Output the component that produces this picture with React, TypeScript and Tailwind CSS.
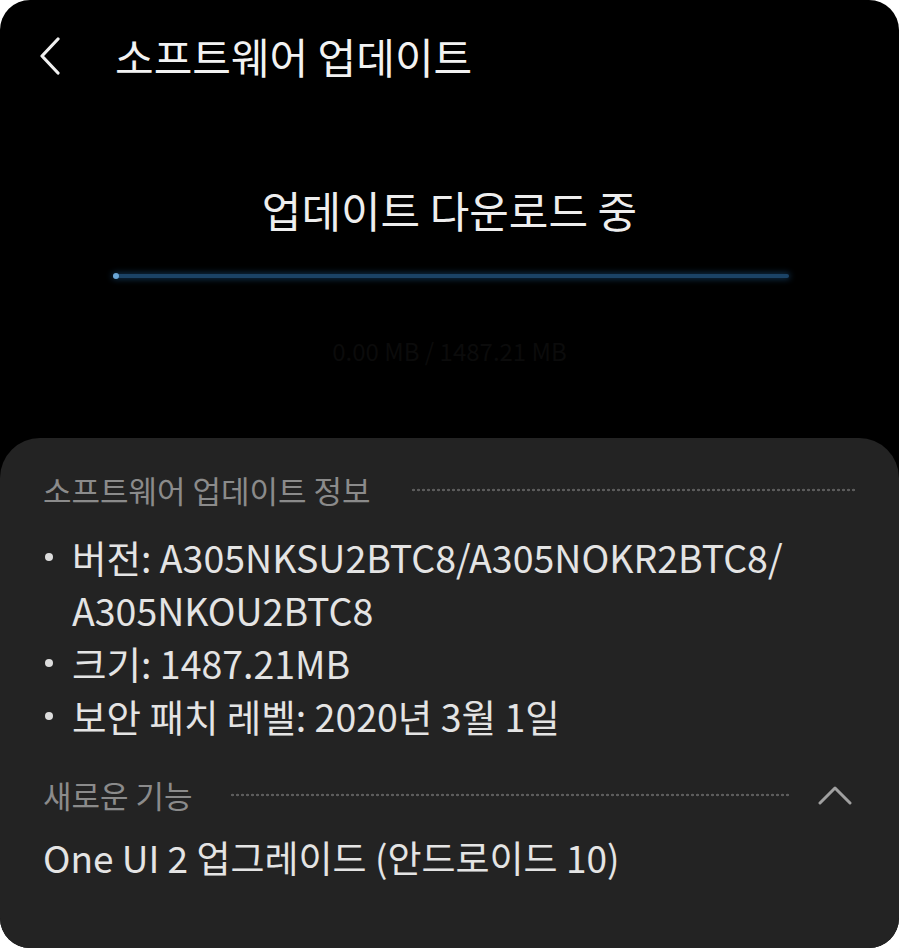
import React from "react";

const font = "font-['Noto_Sans_CJK_KR','Noto_Sans',sans-serif]";

function Dots({ className = "" }: { className?: string }) {
  return (
    <div
      className={`h-[4px] bg-[radial-gradient(circle,#5c5c5c_1.1px,transparent_1.6px)] bg-[length:5px_4px] ${className}`}
    />
  );
}

function Bullet({ children }: { children: React.ReactNode }) {
  return (
    <div className="flex items-start leading-[53px]">
      <div className="w-[29px] h-[53px] flex items-center">
        <div className="w-[8px] h-[8px] rounded-full bg-[#dcdcdc] ml-[2px]" />
      </div>
      <div className="whitespace-nowrap">{children}</div>
    </div>
  );
}

export default function App() {
  return (
    <div className={`w-[899px] h-[948px] bg-white ${font}`}>
      <div className="w-full h-full rounded-[30px] bg-black overflow-hidden flex flex-col">
        {/* top black area */}
        <div className="h-[438px] flex flex-col shrink-0">
          <div className="h-[112px] flex items-center">
            <svg
              width="22"
              height="38"
              viewBox="0 0 22 38"
              className="ml-[39px]"
              fill="none"
              stroke="#f0f0f0"
              strokeWidth="3.2"
              strokeLinecap="round"
              strokeLinejoin="round"
            >
              <polyline points="19,2 3,19 19,36" />
            </svg>
            <div className="ml-[54px] text-[42px] leading-[50px] text-[#f2f2f2] whitespace-nowrap">
              소프트웨어 업데이트
            </div>
          </div>
          <div className="mt-[67px] text-center text-[43px] leading-[60px] text-[#eeeeee] whitespace-nowrap">
            업데이트 다운로드 중
          </div>
          <div className="mt-[35px] ml-[113px] w-[676px] h-[4px] relative">
            <div className="absolute inset-0 rounded-full bg-[#1b4366] shadow-[0_0_6px_1px_#123553]" />
            <div className="absolute left-0 top-[-1px] w-[6px] h-[6px] rounded-full bg-[#6aa6d6]" />
          </div>
          <div className="mt-[58px] text-center text-[24px] leading-[30px] text-[#0b0b0b] whitespace-nowrap">
            0.00 MB / 1487.21 MB
          </div>
        </div>

        {/* bottom card */}
        <div className="flex-1 bg-[#232323] rounded-t-[40px] px-[43px] pt-[32px]">
          <div className="flex items-center h-[40px]">
            <div className="text-[31px] leading-[40px] text-[#8b8b8b] whitespace-nowrap">
              소프트웨어 업데이트 정보
            </div>
            <Dots className="flex-1 ml-[40px] mr-[1px]" />
          </div>

          <div className="mt-[20px] text-[37.5px] text-[#e4e4e4]">
            <Bullet>
              버전: A305NKSU2BTC8/A305NOKR2BTC8/
              <br />
              A305NKOU2BTC8
            </Bullet>
            <Bullet>크기: 1487.21MB</Bullet>
            <Bullet>보안 패치 레벨: 2020년 3월 1일</Bullet>
          </div>

          <div className="mt-[33px] flex items-center h-[40px]">
            <div className="text-[31px] leading-[40px] text-[#8b8b8b] whitespace-nowrap">
              새로운 기능
            </div>
            <Dots className="flex-1 ml-[37px]" />
            <div className="w-[65px] flex justify-end pr-[4px]">
              <svg
                width="34"
                height="20"
                viewBox="0 0 34 20"
                fill="none"
                stroke="#a0a0a0"
                strokeWidth="3"
                strokeLinecap="round"
                strokeLinejoin="round"
              >
                <polyline points="2,18 17,3 32,18" />
              </svg>
            </div>
          </div>

          <div className="mt-[16px] text-[37px] leading-[53px] text-[#e4e4e4] whitespace-nowrap">
            One UI 2 업그레이드 (안드로이드 10)
          </div>
        </div>
      </div>
    </div>
  );
}
